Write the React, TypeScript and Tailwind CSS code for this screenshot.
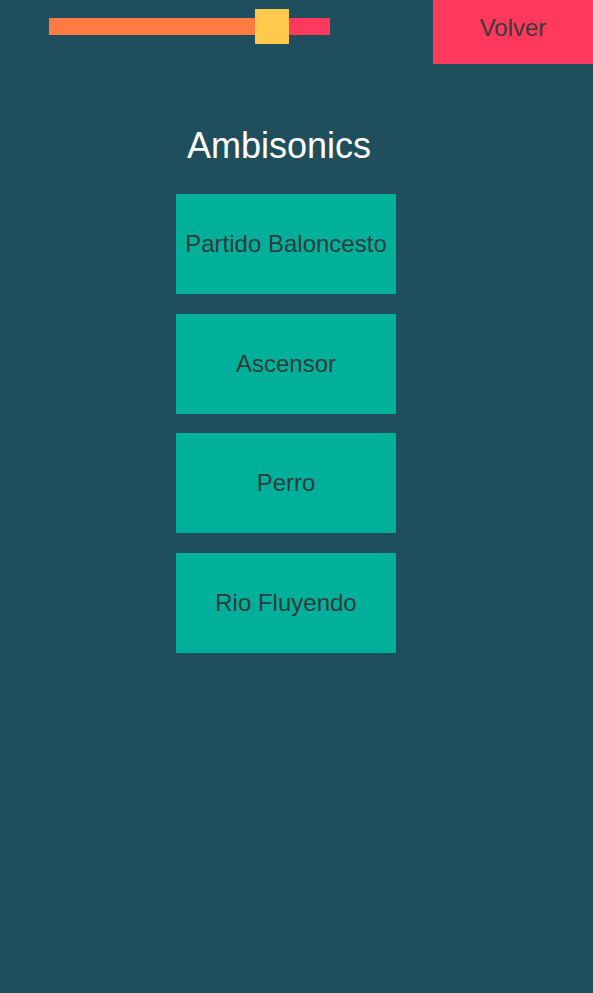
import React from "react";

const items = ["Partido Baloncesto", "Ascensor", "Perro", "Rio Fluyendo"];

export default function App() {
  return (
    <div
      className="w-[593px] h-[993px] bg-[#1f4e5d] flex flex-col"
      style={{ fontFamily: '"Liberation Sans", Arial, sans-serif' }}
    >
      <div className="flex h-[64px]">
        <div className="flex-1 pl-[49px] pt-[18px]">
          <div className="relative w-[281px] h-[17px] flex">
            <div className="w-[223px] h-full bg-[#ff7b43]" />
            <div className="flex-1 h-full bg-[#ff385e]" />
            <div className="absolute left-[206px] top-[-9px] w-[34px] h-[35px] bg-[#ffc94d]" />
          </div>
        </div>
        <button className="w-[160px] h-[64px] bg-[#ff385e] flex justify-center items-start pt-[16px] text-[24px] leading-none text-[#3a3a3a]">
          Volver
        </button>
      </div>
      <div className="flex flex-col items-start">
        <h1 className="mt-[64px] ml-[187px] text-[36px] leading-none text-white">
          Ambisonics
        </h1>
        <div className="mt-[30px] ml-[176px] flex flex-col gap-[19.5px]">
          {items.map((t) => (
            <button
              key={t}
              className="w-[220px] h-[100px] bg-[#00b09b] flex items-center justify-center text-[24px] leading-none text-[#333a3a]"
            >
              {t}
            </button>
          ))}
        </div>
      </div>
    </div>
  );
}
